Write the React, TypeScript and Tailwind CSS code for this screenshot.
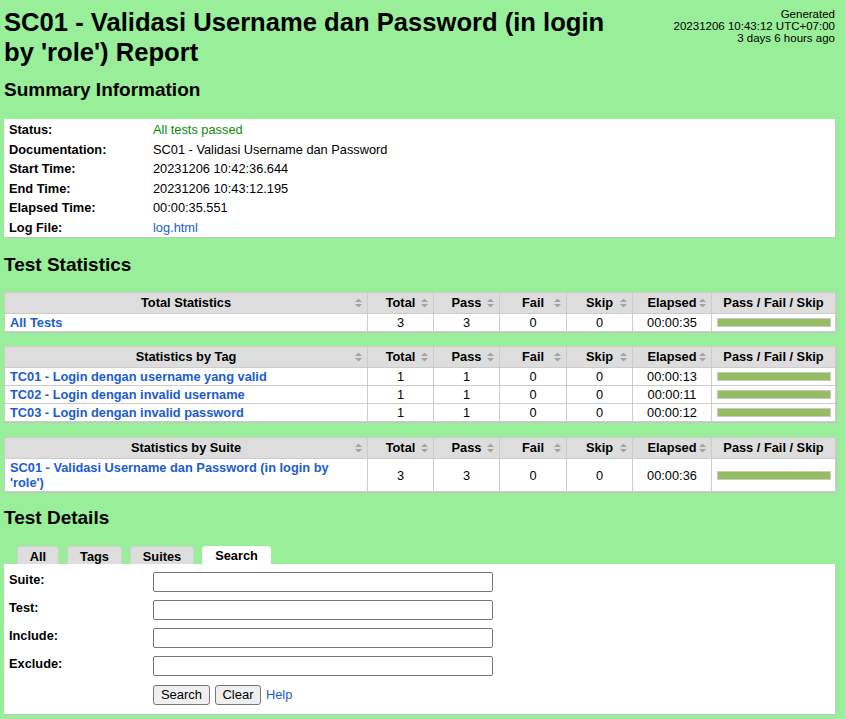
import React from "react";

const LINK = "text-[#1a5ccf]";

function SortIcon() {
  return (
    <svg
      width="7"
      height="9"
      viewBox="0 0 7 9"
      className="absolute right-[5px] top-1/2 -translate-y-1/2"
    >
      <path d="M3.5 0L7 3.5H0z M0 5.5H7L3.5 9z" fill="#a3a3a3" />
    </svg>
  );
}

type Row = { name: string; total: number; pass: number; fail: number; skip: number; elapsed: string };

function Bar() {
  return <div className="h-[9px] border border-[#c8c8c8] bg-[#97bd61] ml-[1px] mr-0" />;
}

function StatTable({ title, rows, className }: { title: string; rows: Row[]; className?: string }) {
  const th = "relative border border-[#cccccc] bg-[#dddddd] h-[21px] font-bold text-center px-[5px]";
  const td = "border border-[#cccccc] text-center px-[5px] leading-[15px] py-[1px]";
  return (
    <table className={"w-[831px] table-fixed border-collapse bg-white shadow-[1px_1px_0_#c4c4c4] " + (className ?? "")}>
      <colgroup>
        <col className="w-[363px]" />
        <col className="w-[66px]" />
        <col className="w-[66px]" />
        <col className="w-[67px]" />
        <col className="w-[66px]" />
        <col className="w-[79px]" />
        <col className="w-[124px]" />
      </colgroup>
      <thead>
        <tr>
          <th className={th}>
            {title}
            <SortIcon />
          </th>
          <th className={th}>
            Total
            <SortIcon />
          </th>
          <th className={th}>
            Pass
            <SortIcon />
          </th>
          <th className={th}>
            Fail
            <SortIcon />
          </th>
          <th className={th}>
            Skip
            <SortIcon />
          </th>
          <th className={th}>
            Elapsed
            <SortIcon />
          </th>
          <th className={th}>Pass / Fail / Skip</th>
        </tr>
      </thead>
      <tbody>
        {rows.map((r) => (
          <tr key={r.name}>
            <td className={"border border-[#cccccc] px-[5px] py-[1px] leading-[15px] text-left font-bold " + LINK}>
              {r.name}
            </td>
            <td className={td}>{r.total}</td>
            <td className={td}>{r.pass}</td>
            <td className={td}>{r.fail}</td>
            <td className={td}>{r.skip}</td>
            <td className={td}>{r.elapsed}</td>
            <td className="border border-[#cccccc] pl-[4px] pr-[4px] py-[1px]">
              <Bar />
            </td>
          </tr>
        ))}
      </tbody>
    </table>
  );
}

export default function App() {
  const summary: [string, React.ReactNode][] = [
    ["Status:", <span className="text-[#0a8a0a]">All tests passed</span>],
    ["Documentation:", "SC01 - Validasi Username dan Password"],
    ["Start Time:", "20231206 10:42:36.644"],
    ["End Time:", "20231206 10:43:12.195"],
    ["Elapsed Time:", "00:00:35.551"],
    ["Log File:", <span className={LINK}>log.html</span>],
  ];

  const tabs = [
    { label: "All", w: "w-[42px]", active: false },
    { label: "Tags", w: "w-[55px]", active: false },
    { label: "Suites", w: "w-[64px]", active: false },
    { label: "Search", w: "w-[69px]", active: true },
  ];

  return (
    <div
      className="min-h-screen bg-[#99ee99] pl-[4px] pr-[10px] pb-[5px] text-[12.8px] text-black"
      style={{ fontFamily: '"Liberation Sans", Arial, Helvetica, sans-serif' }}
    >
      <div className="flex justify-between">
        <h1 className="mt-[7px] text-[25.6px] leading-[30px] font-bold">
          SC01 - Validasi Username dan Password (in login
          <br />
          by 'role') Report
        </h1>
        <div className="mt-[8px] text-right text-[11.5px] leading-[12px]">
          <div>Generated</div>
          <div>20231206 10:43:12 UTC+07:00</div>
          <div>3 days 6 hours ago</div>
        </div>
      </div>

      <h2 className="mt-[11px] text-[19px] leading-[24px] font-bold">Summary Information</h2>
      <div className="mt-[17px] w-[831px] bg-white pt-[1px] shadow-[1px_1px_0_#c4c4c4]">
        {summary.map(([k, v]) => (
          <div key={k} className="grid h-[19.5px] grid-cols-[149px_1fr] items-center">
            <div className="pl-[5px] font-bold">{k}</div>
            <div>{v}</div>
          </div>
        ))}
      </div>

      <h2 className="mt-[16px] text-[19px] leading-[24px] font-bold">Test Statistics</h2>
      <StatTable
        className="mt-[15px]"
        title="Total Statistics"
        rows={[{ name: "All Tests", total: 3, pass: 3, fail: 0, skip: 0, elapsed: "00:00:35" }]}
      />
      <StatTable
        className="mt-[14px]"
        title="Statistics by Tag"
        rows={[
          { name: "TC01 - Login dengan username yang valid", total: 1, pass: 1, fail: 0, skip: 0, elapsed: "00:00:13" },
          { name: "TC02 - Login dengan invalid username", total: 1, pass: 1, fail: 0, skip: 0, elapsed: "00:00:11" },
          { name: "TC03 - Login dengan invalid password", total: 1, pass: 1, fail: 0, skip: 0, elapsed: "00:00:12" },
        ]}
      />
      <StatTable
        className="mt-[15px]"
        title="Statistics by Suite"
        rows={[
          {
            name: "SC01 - Validasi Username dan Password (in login by 'role')",
            total: 3,
            pass: 3,
            fail: 0,
            skip: 0,
            elapsed: "00:00:36",
          },
        ]}
      />

      <h2 className="mt-[14px] text-[19px] leading-[24px] font-bold">Test Details</h2>
      <div className="mt-[16px] flex gap-[8px] pl-[13px]">
        {tabs.map((t) => (
          <div
            key={t.label}
            className={
              "h-[18px] rounded-t-[4px] text-center font-bold leading-[19px] " +
              t.w +
              (t.active ? " bg-white" : " bg-[#dddddd] border-t border-x border-[#d0d0d0]")
            }
          >
            {t.label}
          </div>
        ))}
      </div>
      <div className="flex w-[831px] flex-col gap-[8px] bg-white pt-[8px] pb-[9px] shadow-[1px_1px_0_#c4c4c4]">
        {["Suite:", "Test:", "Include:", "Exclude:"].map((l) => (
          <div key={l} className="grid h-[20px] grid-cols-[149px_340px] items-start">
            <div className="pl-[5px] font-bold leading-[15px]">{l}</div>
            <input className="h-[20px] rounded-[2px] border border-[#767676] bg-white px-[2px] text-[13px] outline-none" />
          </div>
        ))}
        <div className="mt-[1px] flex h-[20px] items-center pl-[149px]">
          <button className="h-[20px] w-[57px] rounded-[3px] border border-[#767676] bg-[#efefef] text-[13px] leading-[16px]">
            Search
          </button>
          <button className="ml-[5px] h-[20px] w-[46px] rounded-[3px] border border-[#767676] bg-[#efefef] text-[13px] leading-[16px]">
            Clear
          </button>
          <span className={"ml-[5px] " + LINK}>Help</span>
        </div>
      </div>
    </div>
  );
}
